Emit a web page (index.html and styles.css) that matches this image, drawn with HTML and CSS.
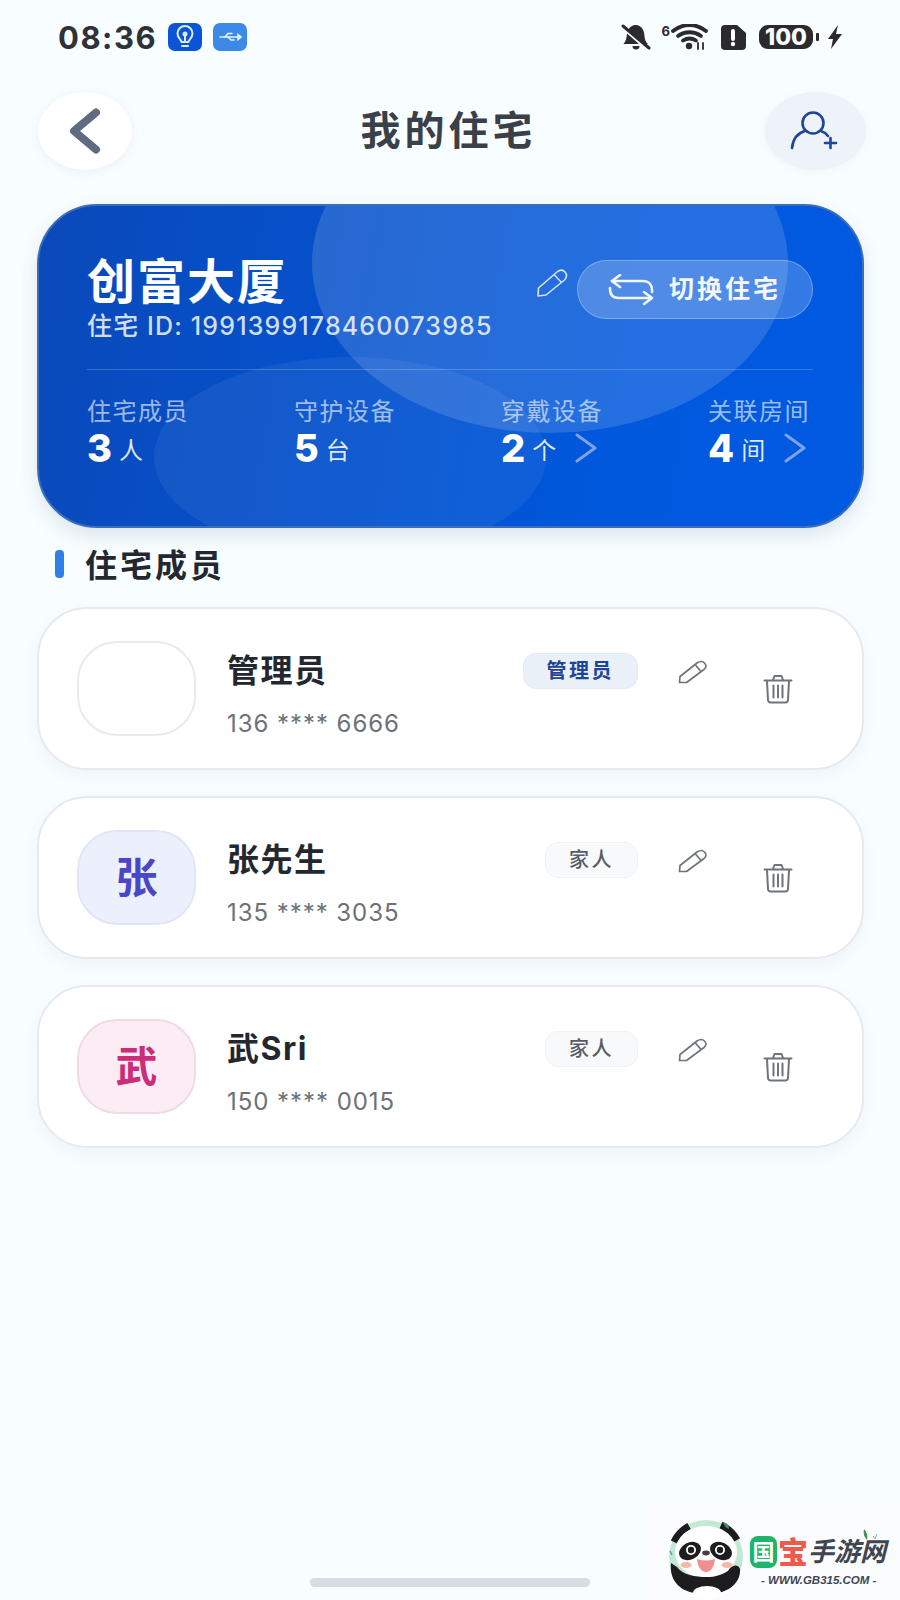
FILE: index.html
```html
<!DOCTYPE html>
<html lang="zh-CN">
<head>
<meta charset="utf-8">
<title>我的住宅</title>
<link rel="stylesheet" href="styles.css">
</head>
<body>
<div class="page">
  <div class="status">
    <div class="status-left">
      <span class="time">08:36</span>
      <span class="chip chip-dark">
        <svg width="24" height="24" viewBox="0 0 24 24" fill="none" stroke="#dcebff" stroke-width="2" stroke-linecap="round" stroke-linejoin="round"><path d="M8.500 17c0-2.500-4-4-4-8.500a7.500 7.500 0 0 1 15 0c0 4.500-4 6-4 8.500z"/><path d="M9 21h6"/><path d="M12 16v-6"/><circle cx="12" cy="9" r="1.500" fill="#dcebff"/></svg>
      </span>
      <span class="chip chip-light">
        <svg width="24" height="14" viewBox="0 0 24 14" fill="none" stroke="#e8f2ff" stroke-width="1.600" stroke-linecap="round"><path d="M2 7h18"/><path d="M7 7l3-3.500h4"/><path d="M10 7l3 3h3"/><path d="M20 4.500L23 7l-3 2.500z" fill="#e8f2ff"/></svg>
      </span>
    </div>
    <div class="status-right">
      <svg class="st-bell" width="30" height="26" viewBox="0 0 30 26" fill="#2b2b2d"><path d="M15 1c-4 0-7 2.500-8 6l15 13h5c-2.500-2-3-4-3.500-7.500C23.500 6 20 1 15 1z"/><path d="M6 9.500c-.3 4-1 7.500-3.500 10.500H18z"/><path d="M11.500 22h7a3.500 3.500 0 0 1-7 0z"/><path d="M2 2l26 22" stroke="#2b2b2d" stroke-width="3" stroke-linecap="round"/></svg>
      <span class="st-six">6</span>
      <svg class="st-wifi" width="37" height="26" viewBox="0 0 37 26" fill="none" stroke="#2b2b2d" stroke-width="3.800" stroke-linecap="round"><path d="M2 7c10-8 23-8 33 0"/><path d="M7 12c7-5 16-5 23 0"/><path d="M12 16.500c4-2.500 9-2.500 13 0"/><circle cx="18" cy="22" r="3.200" fill="#2b2b2d" stroke="none"/><path d="M27 25v-6M32 19v6" stroke-width="1.800"/></svg>
      <svg class="st-sim" width="26" height="25" viewBox="0 0 26 25"><path d="M5 0h12l9 8v13a4 4 0 0 1-4 4H5a4 4 0 0 1-4-4V4a4 4 0 0 1 4-4z" fill="#2b2b2d"/><path d="M13 6v8" stroke="#fff" stroke-width="4" stroke-linecap="round"/><circle cx="13" cy="19" r="2.200" fill="#fff"/></svg>
      <span class="battery">100</span>
      <span class="nub"></span>
      <svg class="st-bolt" width="16" height="24" viewBox="0 0 16 24" fill="#2b2b2d"><path d="M11 0L1 14h5l-2 10 11-15H9z"/></svg>
    </div>
  </div>

  <div class="nav">
    <button class="nav-btn nav-back" type="button">
      <svg width="32" height="46" viewBox="0 0 32 46" fill="none" stroke="#5f6b80" stroke-width="8" stroke-linecap="round" stroke-linejoin="round"><path d="M27 4.500L5 23l22 18.500"/></svg>
    </button>
    <h1 class="title">我的住宅</h1>
    <button class="nav-btn nav-add" type="button">
      <svg width="50" height="42" viewBox="0 0 50 42" fill="none" stroke="#1e4597" stroke-width="2.600" stroke-linecap="round"><circle cx="24" cy="13" r="10.500"/><path d="M3 38c1-10 6-15 13-17"/><path d="M32 21c3 1 5 2 7 5"/><path d="M36 33h11M41.500 28v10"/></svg>
    </button>
  </div>

  <section class="home-card">
    <span class="blob blob-a"></span>
    <span class="blob blob-b"></span>
    <div class="home-head">
      <div>
        <div class="home-name">创富大厦</div>
        <div class="home-id">住宅 ID: 1991399178460073985</div>
      </div>
      <div class="home-actions">
        <svg class="home-edit" width="32" height="30" viewBox="0 0 32 30" fill="none" stroke="#d4e2fa" stroke-width="1.600" stroke-linejoin="round"><path d="M2 28l.5-8L21 4c3-2.500 6-2.500 8 0s2 5.500-.5 8L10 27z"/><path d="M18 6.500l7.500 8"/></svg>
        <button class="switch" type="button">
          <svg width="46" height="32" viewBox="0 0 46 32" fill="none" stroke="#f2f6ff" stroke-width="2.600" stroke-linecap="round" stroke-linejoin="round"><path d="M12 1L4 7l8 6"/><path d="M4 7h31c6 0 9 4 9 9v2"/><path d="M2 14v1c0 6 3 9 9 9h32"/><path d="M36 18l8 6-8 6"/></svg>
          <span>切换住宅</span>
        </button>
      </div>
    </div>
    <div class="home-line"></div>
    <div class="stats">
      <div class="stat">
        <div class="stat-label">住宅成员</div>
        <div class="stat-value"><b>3</b><span>人</span></div>
      </div>
      <div class="stat">
        <div class="stat-label">守护设备</div>
        <div class="stat-value"><b>5</b><span>台</span></div>
      </div>
      <div class="stat">
        <div class="stat-label">穿戴设备</div>
        <div class="stat-value"><b>2</b><span>个</span>
          <svg class="chev" width="22" height="30" viewBox="0 0 22 30" fill="none" stroke="#7ba2ea" stroke-width="3" stroke-linecap="round" stroke-linejoin="round"><path d="M2 2l18 13L2 28"/></svg>
        </div>
      </div>
      <div class="stat">
        <div class="stat-label">关联房间</div>
        <div class="stat-value"><b>4</b><span>间</span>
          <svg class="chev" width="22" height="30" viewBox="0 0 22 30" fill="none" stroke="#7ba2ea" stroke-width="3" stroke-linecap="round" stroke-linejoin="round"><path d="M2 2l18 13L2 28"/></svg>
        </div>
      </div>
    </div>
  </section>

  <h2 class="section"><i class="section-bar"></i>住宅成员</h2>

  <div class="members">
    <article class="member">
      <div class="avatar"></div>
      <div class="info">
        <div class="name">管理员</div>
        <div class="phone">136 **** 6666</div>
      </div>
      <span class="tag tag-admin">管理员</span>
      <svg class="m-edit" width="30" height="24" viewBox="0 0 30 24" fill="none" stroke="#6f747b" stroke-width="1.700" stroke-linejoin="round"><path d="M1.500 22.500l.5-6L19 3c3-2 5.500-2 7.500 0s2 4.500-.5 6.500L8.500 22.500z"/><path d="M17 4.500l6.500 7.500"/></svg>
      <svg class="m-del" width="30" height="30" viewBox="0 0 30 30" fill="none" stroke="#6f747b" stroke-width="2" stroke-linecap="round" stroke-linejoin="round"><path d="M1.500 6.500h27"/><path d="M10 6l1.500-4h7L20 6"/><path d="M4 7l1 19a2.500 2.500 0 0 0 2.500 2.500h15A2.500 2.500 0 0 0 25 26l1-19"/><path d="M10.500 11.500v12M15 11.500v12M19.500 11.500v12"/></svg>
    </article>
    <article class="member">
      <div class="avatar avatar-blue">张</div>
      <div class="info">
        <div class="name">张先生</div>
        <div class="phone">135 **** 3035</div>
      </div>
      <span class="tag">家人</span>
      <svg class="m-edit" width="30" height="24" viewBox="0 0 30 24" fill="none" stroke="#6f747b" stroke-width="1.700" stroke-linejoin="round"><path d="M1.500 22.500l.5-6L19 3c3-2 5.500-2 7.500 0s2 4.500-.5 6.500L8.500 22.500z"/><path d="M17 4.500l6.500 7.500"/></svg>
      <svg class="m-del" width="30" height="30" viewBox="0 0 30 30" fill="none" stroke="#6f747b" stroke-width="2" stroke-linecap="round" stroke-linejoin="round"><path d="M1.500 6.500h27"/><path d="M10 6l1.500-4h7L20 6"/><path d="M4 7l1 19a2.500 2.500 0 0 0 2.500 2.500h15A2.500 2.500 0 0 0 25 26l1-19"/><path d="M10.500 11.500v12M15 11.500v12M19.500 11.500v12"/></svg>
    </article>
    <article class="member">
      <div class="avatar avatar-pink">武</div>
      <div class="info">
        <div class="name">武Sri</div>
        <div class="phone">150 **** 0015</div>
      </div>
      <span class="tag">家人</span>
      <svg class="m-edit" width="30" height="24" viewBox="0 0 30 24" fill="none" stroke="#6f747b" stroke-width="1.700" stroke-linejoin="round"><path d="M1.500 22.500l.5-6L19 3c3-2 5.500-2 7.500 0s2 4.500-.5 6.500L8.500 22.500z"/><path d="M17 4.500l6.500 7.500"/></svg>
      <svg class="m-del" width="30" height="30" viewBox="0 0 30 30" fill="none" stroke="#6f747b" stroke-width="2" stroke-linecap="round" stroke-linejoin="round"><path d="M1.500 6.500h27"/><path d="M10 6l1.500-4h7L20 6"/><path d="M4 7l1 19a2.500 2.500 0 0 0 2.500 2.500h15A2.500 2.500 0 0 0 25 26l1-19"/><path d="M10.500 11.500v12M15 11.500v12M19.500 11.500v12"/></svg>
    </article>
  </div>

  <div class="home-bar"></div>

  <aside class="mark">
    <svg class="panda" width="80" height="72" viewBox="0 0 80 72">
      <circle cx="41" cy="36" r="37" fill="#c3e8d6"/>
      <path d="M9 21A35 35 0 0 1 24 5" fill="none" stroke="#1d1d1f" stroke-width="7"/>
      <path d="M56 4A35 35 0 0 1 72 19" fill="none" stroke="#1d1d1f" stroke-width="7"/>
      <ellipse cx="41" cy="31" rx="31" ry="26" fill="#fff"/>
      <path d="M6 42C4 58 14 70 30 72H52C66 70 76 60 75 48 73 42 66 44 63 50 56 54 50 56 42 56 30 56 18 54 12 46Z" fill="#1d1d1f"/>
      <ellipse cx="42" cy="72" rx="14" ry="7" fill="#fff"/>
      <ellipse cx="25" cy="30" rx="11.500" ry="8.500" fill="#1d1d1f" transform="rotate(-28 25 30)"/>
      <ellipse cx="56" cy="30" rx="11.500" ry="8.500" fill="#1d1d1f" transform="rotate(28 56 30)"/>
      <circle cx="26" cy="29" r="5" fill="#fff"/><circle cx="26" cy="29" r="3.200" fill="#1d1d1f"/>
      <circle cx="55" cy="29" r="5" fill="#fff"/><circle cx="55" cy="29" r="3.200" fill="#1d1d1f"/>
      <ellipse cx="41" cy="32" rx="3.800" ry="2.400" fill="#4b3b3b"/>
      <path d="M32 38c6 2 12 2 18 0-1 8-4 13-9 13s-8-5-9-13z" fill="#ef8f8f"/>
      <ellipse cx="21" cy="44" rx="5.500" ry="3" fill="#f6b7a9"/>
      <ellipse cx="62" cy="44" rx="5.500" ry="3" fill="#f6b7a9"/>
      <path d="M58 1c1 4 3 6 6 7 0-4-2-6-6-7z" fill="#3f8f63"/>
      <path d="M5 30l2 4" stroke="#6aa585" stroke-width="1.500" fill="none"/>
    </svg>
    <div class="mark-text">
      <div class="mark-name"><span class="mk-guo">国</span><span class="mk-bao">宝</span><span class="mk-rest">手游网</span></div>
      <div class="mark-url">- WWW.GB315.COM -</div>
    </div>
    <svg class="mark-leaf" width="16" height="12" viewBox="0 0 16 12" fill="none"><path d="M1 0c-1 4 0 8 3 11 1-4 0-8-3-11z" fill="#3f8f63"/><path d="M10 7l2 3 2-5" stroke="#8fb8a2" stroke-width="1"/></svg>
  </aside>
</div>
</body>
</html>
```
FILE: styles.css
```css
* { box-sizing: border-box; }
html, body { margin: 0; padding: 0; }
body {
  width: 900px;
  height: 1600px;
  overflow: hidden;
  background: #f8fdff;
  font-family: Inter, "Noto Sans CJK SC", "Noto Sans", sans-serif;
  color: #23282f;
}
.page {
  position: relative;
  display: flex;
  flex-direction: column;
  height: 1600px;
}

/* status bar */
.status {
  display: flex;
  justify-content: space-between;
  align-items: center;
  height: 74px;
  padding: 0 57px 0 58px;
  flex: none;
}
.status-left, .status-right { display: flex; align-items: center; }
.time { font-size: 31px; font-weight: 700; letter-spacing: 1.500px; color: #2f3237; width: 110px; }
.chip { display: flex; align-items: center; justify-content: center; width: 34px; height: 28px; border-radius: 7px; }
.chip-dark { background: #0a55d6; }
.chip-light { background: #3b8ae8; margin-left: 11px; }
.st-six { font-size: 13px; font-weight: 700; color: #2b2b2d; align-self: flex-start; margin: 0 1px 0 11px; line-height: 14px; }
.st-sim { margin-left: 12px; }
.battery {
  margin-left: 13px;
  width: 54px; height: 24px;
  border-radius: 9px;
  background: #2b2b2d;
  color: #f8fdff;
  font-size: 23px; font-weight: 800;
  line-height: 24px;
  text-align: center;
}
.nub { width: 3px; height: 8px; background: #2b2b2d; margin-left: 3px; border-radius: 1px; }
.st-bolt { margin-left: 8px; }

/* nav */
.nav {
  display: grid;
  grid-template-columns: 94px 1fr 101px;
  align-items: center;
  height: 78px;
  margin-top: 18px;
  padding: 0 34px 0 38px;
  flex: none;
}
.nav-btn {
  display: flex; align-items: center; justify-content: center;
  height: 78px;
  border: 0; padding: 0;
  border-radius: 50%;
}
.nav-back { background: #fff; box-shadow: 0 2px 8px rgba(120,130,150,.10); }
.nav-add { background: #eef2f9; box-shadow: 0 2px 8px rgba(120,130,150,.06); padding-right: 3px; }
.title { margin: 0; text-align: center; font-size: 40px; font-weight: 700; letter-spacing: 4px; line-height: 76px; color: #3a4048; }

/* home card */
.home-card {
  position: relative;
  overflow: hidden;
  flex: none;
  height: 324px;
  margin: 34px 36px 0 37px;
  padding: 48px 49px 0 48px;
  border-radius: 60px;
  border: 2px solid #3a6fb8;
  background: linear-gradient(100deg, #0a49ba 0%, #0058dc 70%, #005ae2 100%);
  box-shadow: 0 8px 18px rgba(60,90,140,.14);
  color: #fff;
}
.blob { position: absolute; border-radius: 50%; background: #fff; }
.blob-a { left: 273px; top: -113px; width: 476px; height: 340px; opacity: .14; }
.blob-b { left: 115px; top: 151px; width: 392px; height: 200px; opacity: .06; }
.home-head, .home-line, .stats { position: relative; }
.home-head { display: flex; justify-content: space-between; align-items: flex-start; }
.home-name { font-size: 48px; font-weight: 700; letter-spacing: 2px; line-height: 56px; }
.home-id { font-size: 25px; font-weight: 500; line-height: 32px; letter-spacing: 1.150px; color: rgba(255,255,255,.82); }
.home-actions { display: flex; align-items: center; gap: 9px; margin-top: 6px; }
.home-edit { margin-bottom: 14px; }
.switch {
  display: flex; align-items: center; gap: 15px;
  width: 236px; height: 59px;
  padding: 0 0 0 30px;
  border-radius: 30px;
  border: 1.500px solid rgba(255,255,255,.28);
  background: rgba(255,255,255,.2);
  color: #f4f7ff;
  font: 700 25px/1 Inter, "Noto Sans CJK SC", sans-serif;
  letter-spacing: 3px;
}
.home-line { height: 1px; margin-top: 27px; background: rgba(255,255,255,.2); }
.stats { display: grid; grid-template-columns: repeat(3, 207px) 1fr; margin-top: 27px; }
.stat-label { font-size: 24px; line-height: 30px; letter-spacing: 1.500px; color: rgba(255,255,255,.62); white-space: nowrap; }
.stat-value { display: flex; align-items: center; height: 44px; margin-top: -1px; }
.stat-value b { font-size: 38px; font-weight: 800; line-height: 44px; }
.stat-value span { font-size: 24px; margin-left: 7px; color: rgba(255,255,255,.88); }
.chev { margin-left: 19px; }

/* section */
.section {
  display: flex; align-items: center;
  height: 40px;
  margin: 15px 0 0;
  padding-left: 55px;
  font-size: 32px; font-weight: 700; letter-spacing: 3px;
  color: #23282f;
  flex: none;
}
.section-bar { width: 9px; height: 28px; border-radius: 4px; background: #2f7fe6; margin: 2px 21px 0 0; }

/* members */
.members { display: flex; flex-direction: column; gap: 26px; margin: 24px 36px 0 37px; flex: none; }
.member {
  display: flex; align-items: flex-start;
  height: 163px;
  padding: 32px 69px 0 38px;
  background: #fff;
  border: 2px solid #e6eaef;
  border-radius: 50px;
  box-shadow: 0 6px 14px rgba(110,130,160,.07);
}
.avatar {
  display: flex; align-items: center; justify-content: center;
  width: 119px; height: 95px;
  padding-bottom: 7px;
  border-radius: 40px;
  border: 2px solid #e8eaee;
  background: #fff;
  font-size: 42px; font-weight: 700;
  flex: none;
}
.avatar-blue { background: #ecf0fc; color: #4a47c6; border-color: #e2e6f2; }
.avatar-pink { background: #fcedf5; color: #cc2d78; border-color: #efdbe6; }
.info { flex: 1; margin: 10px 0 0 31px; }
.name { font-size: 32px; font-weight: 700; letter-spacing: 1.500px; line-height: 40px; color: #23282f; }
.phone { font-size: 24px; line-height: 40px; margin-top: 13px; letter-spacing: .95px; color: #6c7178; }
.tag {
  margin-top: 12px;
  height: 36px;
  padding: 0 23px;
  border-radius: 13px;
  background: #f7f9fb;
  border: 1px solid #f0f3f6;
  font-size: 20px; font-weight: 500; letter-spacing: 2.500px; line-height: 34px;
  color: #565c64;
}
.tag-admin { background: #e9f0f8; color: #1e4597; font-weight: 700; border-color: #e2eaf4; }
.m-edit { margin: 19px 0 0 40px; flex: none; }
.m-del { margin: 33px 0 0 55px; flex: none; }

/* bottom */
.home-bar { width: 280px; height: 9px; margin: auto 0 13px 310px; border-radius: 5px; background: #d9dce2; flex: none; }

/* watermark */
.mark {
  position: absolute; right: 0; bottom: 0;
  display: flex; align-items: flex-end;
  width: 252px; height: 95px;
  padding: 0 12px 7px 17px;
  background: #fbfcfd;
}
.panda { flex: none; overflow: visible; }
.mark-text { margin-left: 5px; padding-bottom: 4px; }
.mark-name { display: flex; align-items: center; height: 34px; }
.mk-guo { width: 27px; height: 32px; border-radius: 8px; background: #1fb36b; color: #fff; font-size: 22px; font-weight: 700; line-height: 32px; text-align: center; }
.mk-bao { font-size: 30px; font-weight: 900; color: #ef5a4c; line-height: 34px; margin-left: 1px; }
.mk-rest { font-size: 26px; font-weight: 700; font-style: italic; color: #3f4650; line-height: 34px; margin-left: 0; white-space: nowrap; }
.mark-url { font: italic 700 11.500px/18px "Liberation Sans", sans-serif; color: #3f4650; white-space: nowrap; padding-left: 11px; margin-top: 2px; }
.mark-leaf { position: absolute; left: 215px; top: 24px; }
```
